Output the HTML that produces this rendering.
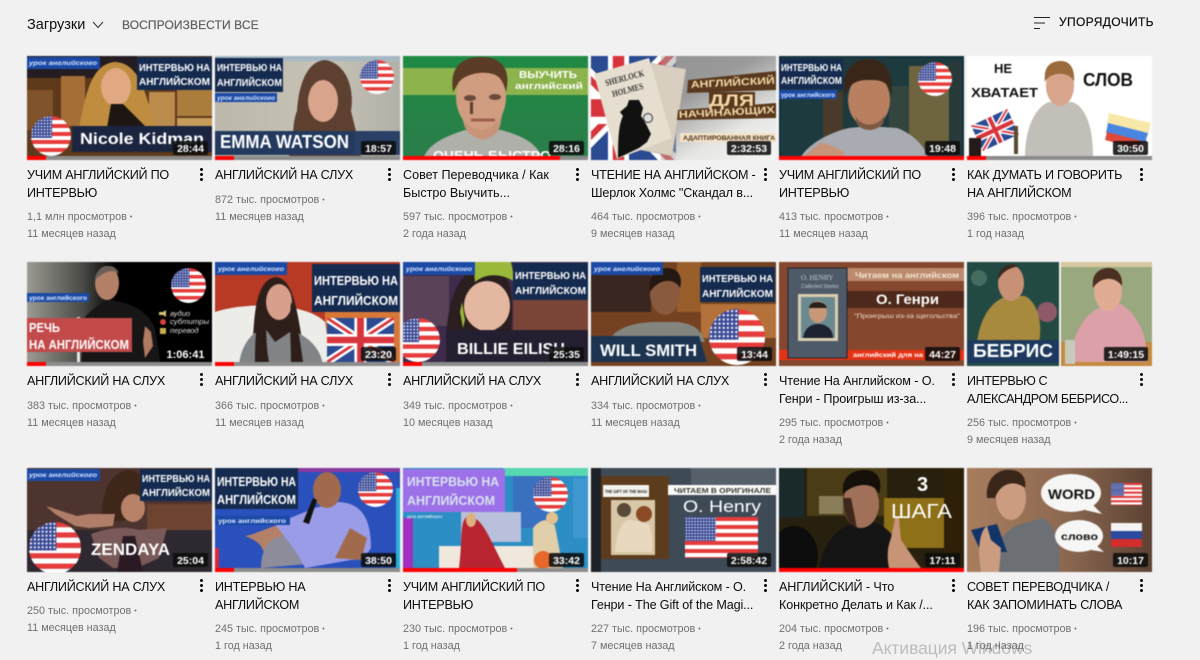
<!DOCTYPE html>
<html lang="ru"><head><meta charset="utf-8"><title>Загрузки</title>
<style>
html,body{margin:0;padding:0;background:#f1f1f1}
body{width:1200px;height:660px;overflow:hidden;position:relative;font-family:"Liberation Sans","DejaVu Sans",sans-serif}
.a{position:absolute;white-space:nowrap}
.th{position:absolute;width:185px;height:104px;filter:blur(.5px);display:block}
.ti{position:absolute;font-size:12.6px;line-height:18px;color:#0d0d0d;white-space:nowrap;filter:blur(.25px);margin-top:1px}
.c{letter-spacing:-.24px}
.m{position:absolute;font-size:10.8px;line-height:16px;color:#707070;white-space:nowrap;filter:blur(.25px);margin-top:1px}
.m i{font-style:normal;font-size:7px;vertical-align:1px}
.dots{position:absolute;width:3px;height:13px;background:radial-gradient(circle at 1.5px 1.5px,#111 1.4px,transparent 1.6px) 0 0/3px 5px repeat-y}
text{font-family:"Liberation Sans","DejaVu Sans",sans-serif}
.d{fill:#fff;font-weight:700;font-size:10.5px;text-anchor:middle}
.u{fill:#d8e4ff;font-style:italic;font-size:6px;font-weight:700}
.n{fill:#fff;font-weight:700;font-size:10px}
.b{fill:#fff;font-weight:700;font-size:16px}
</style></head><body>
<svg width="0" height="0" style="position:absolute"><defs>
<pattern id="st" width="2" height="8" patternUnits="userSpaceOnUse"><rect width="2" height="4" fill="#e63c3c"/><rect y="4" width="2" height="4" fill="#fff"/></pattern>
<pattern id="sd" width="3" height="3" patternUnits="userSpaceOnUse"><rect width="3" height="3" fill="#3a4a96"/><circle cx="1.5" cy="1.5" r=".8" fill="#fff"/></pattern>
<clipPath id="cc"><circle cx="20" cy="20" r="20"/></clipPath>
<symbol id="f" viewBox="0 0 40 40"><g clip-path="url(#cc)"><rect width="40" height="40" fill="url(#st)"/><rect width="21" height="22" fill="url(#sd)"/></g></symbol>
<symbol id="fr" viewBox="0 0 76 41" preserveAspectRatio="none"><rect width="76" height="41" fill="url(#st)"/><rect width="32" height="24" fill="url(#sd)"/></symbol>
<symbol id="uk" viewBox="0 0 60 40" preserveAspectRatio="none"><rect width="60" height="40" fill="#2a4a92"/><path d="M0 0L60 40M60 0L0 40" stroke="#fff" stroke-width="7"/><path d="M0 0L60 40M60 0L0 40" stroke="#d8343c" stroke-width="2.5"/><path d="M30 0V40M0 20H60" stroke="#fff" stroke-width="11"/><path d="M30 0V40M0 20H60" stroke="#d8343c" stroke-width="6"/></symbol>
<linearGradient id="g1" x1="0" x2="1" y1="0" y2="0"><stop offset="0" stop-color="#9b9b93"/><stop offset=".3" stop-color="#4a4a46"/><stop offset=".48" stop-color="#000"/></linearGradient>
<linearGradient id="g2" x1="0" x2="1" y1="0" y2="1"><stop offset="0" stop-color="#8f8f8f"/><stop offset=".45" stop-color="#9a9a9a"/><stop offset=".75" stop-color="#e6e6e4"/><stop offset="1" stop-color="#f6f6f4"/></linearGradient>
<linearGradient id="g3" x1="0" x2="0" y1="0" y2="1"><stop offset="0" stop-color="#1f8a44"/><stop offset="1" stop-color="#2b7d4a"/></linearGradient>
<linearGradient id="g4" x1="0" x2="1" y1="0" y2="0"><stop offset="0" stop-color="#a87d5e"/><stop offset=".5" stop-color="#8e6a52"/><stop offset="1" stop-color="#5c4234"/></linearGradient>
<linearGradient id="g5" x1="0" x2="1" y1="0" y2="0"><stop offset="0" stop-color="#bcb8ac"/><stop offset=".6" stop-color="#c6c3b6"/><stop offset="1" stop-color="#b2b1a8"/></linearGradient>
</defs></svg>

<div class="a" style="left:27px;top:17px;font-size:14.5px;line-height:17px;color:#0d0d0d">Загрузки</div>
<svg class="a" style="left:92px;top:21px" width="12" height="8"><path d="M1 1L6 6.500L11 1" fill="none" stroke="#333" stroke-width="1"/></svg>
<div class="a" style="left:122px;top:17px;font-size:12px;line-height:16px;color:#606060;letter-spacing:.1px;-webkit-text-stroke:.2px #606060">ВОСПРОИЗВЕСТИ ВСЕ</div>
<svg class="a" style="left:1034px;top:15px" width="17" height="16"><path d="M0 2.500H16M0 8H11M0 13.500H6" stroke="#222" stroke-width="1"/></svg>
<div class="a" style="left:1059px;top:14px;font-size:12px;line-height:16px;color:#0d0d0d;letter-spacing:.35px;-webkit-text-stroke:.2px #0d0d0d">УПОРЯДОЧИТЬ</div>

<!-- ROW 1 -->
<svg class="th" style="left:27px;top:56px" viewBox="0 0 185 104">
<rect width="185" height="104" fill="#5e3a1a"/><rect y="0" width="110" height="22" fill="#241c20"/><rect x="0" y="34" width="26" height="40" fill="#80532a"/><rect x="34" y="20" width="24" height="50" fill="#a56e36"/><rect x="122" y="36" width="26" height="36" fill="#bb8c4c"/><rect x="150" y="30" width="35" height="30" fill="#ab7d3c"/><rect x="150" y="62" width="35" height="10" fill="#c69c5a"/>
<path d="M52 72C58 45 62 8 88 6C112 7 118 35 128 70Z" fill="#c08d40"/><ellipse cx="89" cy="31" rx="15" ry="19" fill="#e0a982"/><path d="M80 72L84 48H96L120 72Z" fill="#1d1612"/>
<rect x="45" y="70" width="140" height="26" fill="#1c2540"/><use href="#f" x="4" y="60" width="40" height="40"/>
<rect width="73" height="12" y="1" fill="#1b4aa6"/><text x="2" y="9" class="u" textLength="68" lengthAdjust="spacingAndGlyphs">урок английского</text>
<rect x="110" y="1" width="75" height="33" fill="#142a4e"/><text x="112" y="15" class="n" textLength="71" lengthAdjust="spacingAndGlyphs">ИНТЕРВЬЮ НА</text><text x="112" y="29" class="n" textLength="71" lengthAdjust="spacingAndGlyphs">АНГЛИЙСКОМ</text>
<text x="53" y="88" class="b" textLength="124" lengthAdjust="spacingAndGlyphs">Nicole Kidman</text>
<rect x="146" y="85" width="35" height="14" rx="2" fill="#0c0c0c" opacity=".88"/><text x="163.500" y="96" class="d">28:44</text>
<rect y="100" width="185" height="4" fill="#8c8c8c"/><rect y="100" width="19" height="4" fill="#f00"/></svg>

<svg class="th" style="left:215px;top:56px" viewBox="0 0 185 104">
<rect width="185" height="104" fill="url(#g5)"/><rect x="0" width="185" height="5" fill="#a6b8c4"/>
<path d="M74 100C80 85 76 70 82 55C84 24 94 5 110 4C130 7 140 30 136 55C140 72 144 85 146 100Z" fill="#5e4030"/><ellipse cx="108" cy="45" rx="15" ry="21" fill="#d8a48c"/><path d="M96 96C100 76 116 72 122 78C132 78 146 86 146 96Z" fill="#16161a"/>
<rect x="0" y="75" width="140" height="24" fill="#233a5e"/><rect x="140" y="75" width="45" height="24" fill="#2a4066"/>
<rect y="2" width="68" height="34" fill="#142a4e"/><text x="2" y="15" class="n" textLength="65" lengthAdjust="spacingAndGlyphs">ИНТЕРВЬЮ НА</text><text x="2" y="30" class="n" textLength="65" lengthAdjust="spacingAndGlyphs">АНГЛИЙСКОМ</text>
<rect y="37" width="62" height="9" fill="#1b4aa6"/><text x="2" y="44" class="u" textLength="58" lengthAdjust="spacingAndGlyphs">урок английского</text>
<use href="#f" x="145" y="4" width="34" height="34"/>
<text x="5" y="92" class="b" font-size="18" style="font-size:18px" textLength="129" lengthAdjust="spacingAndGlyphs">EMMA WATSON</text>
<rect x="146" y="85" width="35" height="14" rx="2" fill="#0c0c0c" opacity=".88"/><text x="163.500" y="96" class="d">18:57</text>
<rect y="100" width="185" height="4" fill="#8c8c8c"/><rect y="100" width="19" height="4" fill="#f00"/></svg>

<svg class="th" style="left:403px;top:56px" viewBox="0 0 185 104">
<rect width="185" height="104" fill="url(#g3)"/><rect y="12" width="185" height="27" fill="#8cb34c"/>
<path d="M20 104C24 86 50 78 62 74H98C112 78 134 84 140 104Z" fill="#b0b0aa"/><path d="M58 58C62 70 60 78 80 84C100 78 96 70 100 56Z" fill="#c89478"/>
<ellipse cx="78" cy="41" rx="25" ry="33" fill="#d09d80"/><path d="M50 36C46 10 60 1 78 1C100 1 108 14 103 36C100 24 96 20 90 18C76 14 60 20 56 26Z" fill="#5a3c24"/>
<ellipse cx="67" cy="42" rx="6" ry="3" fill="#6a4a3c"/><ellipse cx="92" cy="41" rx="6" ry="3" fill="#6a4a3c"/><rect x="67" y="46" width="3" height="12" fill="#5a3e30"/><path d="M68 64H92" stroke="#9e5e4e" stroke-width="3"/>
<text x="116" y="22" class="n" textLength="58" lengthAdjust="spacingAndGlyphs">ВЫУЧИТЬ</text><text x="112" y="33" class="n" textLength="68" lengthAdjust="spacingAndGlyphs" style="font-size:9px">английский</text>
<text x="30" y="104" class="b" style="font-size:13px" textLength="118" lengthAdjust="spacingAndGlyphs">ОЧЕНЬ БЫСТРО</text>
<rect x="146" y="85" width="35" height="14" rx="2" fill="#0c0c0c" opacity=".88"/><text x="163.500" y="96" class="d">28:16</text>
<rect y="100" width="185" height="4" fill="#8c8c8c"/><rect y="100" width="157" height="4" fill="#f00"/></svg>

<svg class="th" style="left:591px;top:56px" viewBox="0 0 185 104">
<rect width="185" height="104" fill="url(#g2)"/><use href="#uk" x="-30" y="-6" width="115" height="116"/><path d="M70 0H85L85 104H70Z" fill="#a6a6a4" opacity=".5"/>
<path d="M58 7L95 13L81 100L50 94Z" fill="#d8cfc0" stroke="#b4aa9a" stroke-width=".5"/><path d="M3 18L58 2L81 82L26 103Z" fill="#e6dfd0"/>
<text x="15" y="30" transform="rotate(-15 15 30)" fill="#333" style="font-family:'Liberation Serif';font-weight:700;font-size:9px" textLength="40" lengthAdjust="spacingAndGlyphs">SHERLOCK</text><text x="22" y="41" transform="rotate(-15 22 41)" style="font-family:'Liberation Serif';font-weight:700;font-size:9px" fill="#333" textLength="32" lengthAdjust="spacingAndGlyphs">HOLMES</text>
<path d="M27 102C27 80 28 68 32 60L29 56L36 50L38 44L48 44L52 52L50 60L55 68L60 78L56 86L48 92Z" fill="#111"/><circle cx="57" cy="62" r="4.500" fill="#ddd" stroke="#333" stroke-width="1"/>
<path d="M97 24L185 15V34L96 37Z M118 36H164V52H118Z M87 54L185 47V62L86 64Z" fill="#5a3a1e"/>
<text x="100" y="32" style="font-size:10px;font-weight:700" fill="#f4d8a8" textLength="84" lengthAdjust="spacingAndGlyphs" transform="rotate(-3 100 32)">АНГЛИЙСКИЙ</text><text x="118" y="50" style="font-size:17px;font-weight:700" fill="#f4d8a8" textLength="45" lengthAdjust="spacingAndGlyphs">ДЛЯ</text><text x="88" y="62" style="font-size:10px;font-weight:700" fill="#f4d8a8" textLength="96" lengthAdjust="spacingAndGlyphs" transform="rotate(-3 88 62)">НАЧИНАЮЩИХ</text>
<rect x="89" y="77" width="96" height="9" fill="#f5e2c8"/><text x="92" y="84" style="font-size:6px;font-weight:700" fill="#4a3218" textLength="92" lengthAdjust="spacingAndGlyphs">АДАПТИРОВАННАЯ КНИГА</text>
<rect x="136" y="85" width="44" height="14" rx="2" fill="#0c0c0c" opacity=".88"/><text x="158" y="96" class="d">2:32:53</text></svg>

<svg class="th" style="left:779px;top:56px" viewBox="0 0 185 104">
<rect width="185" height="104" fill="#13313c"/><rect x="2" y="2" width="181" height="100" fill="#1d3a3e"/><rect x="44" y="36" width="20" height="60" fill="#4a3a2a"/><rect x="130" y="10" width="40" height="85" fill="#6e6440"/><rect x="110" y="30" width="20" height="60" fill="#34443e"/><rect x="172" y="6" width="10" height="90" fill="#2a3a38"/>
<path d="M20 104C30 84 60 74 70 72L90 70L118 72C130 76 146 88 150 104Z" fill="#a8acb2"/><path d="M20 104L40 88C44 84 56 92 66 96L60 104Z" fill="#c89478"/>
<ellipse cx="90" cy="44" rx="21" ry="27" fill="#b98060"/><path d="M66 40C62 12 76 3 90 3C106 3 116 18 112 40C110 24 100 24 90 24C80 24 70 26 66 40Z" fill="#3a2618"/><path d="M76 58C80 72 100 72 106 58L104 68C96 76 84 76 78 68Z" fill="#7e5a42"/>
<rect y="3" width="64" height="30" fill="#142a4e"/><text x="2" y="15" class="n" textLength="61" lengthAdjust="spacingAndGlyphs">ИНТЕРВЬЮ НА</text><text x="2" y="28" class="n" textLength="61" lengthAdjust="spacingAndGlyphs">АНГЛИЙСКОМ</text>
<rect y="34" width="58" height="9" fill="#1b4aa6"/><text x="2" y="41" class="u" textLength="54" lengthAdjust="spacingAndGlyphs" style="font-style:normal">урок английского</text>
<use href="#f" x="139" y="6" width="34" height="34"/>
<rect x="146" y="85" width="35" height="14" rx="2" fill="#0c0c0c" opacity=".88"/><text x="163.500" y="96" class="d">19:48</text>
<rect y="100" width="185" height="4" fill="#f00"/></svg>

<svg class="th" style="left:967px;top:56px" viewBox="0 0 185 104">
<rect width="185" height="104" fill="#fff"/>
<path d="M58 100C58 70 70 50 82 46L105 46C118 50 126 70 126 100Z" fill="#c2bfb9"/><ellipse cx="93" cy="30" rx="14" ry="20" fill="#d8a48c"/><path d="M78 26C76 8 86 5 94 5C104 5 108 14 107 26C104 16 84 14 78 26Z" fill="#9a6c3c"/>
<g transform="rotate(-25 28 74)"><use href="#uk" x="8" y="60" width="40" height="28"/></g>
<path d="M142 57L184 67L181 79L140 68Z" fill="#f8e8a8"/><path d="M141 67L181 77L178 87L139 77Z" fill="#4a86e0"/><path d="M140 76L175 85L172 93L138 84Z" fill="#e0483c"/><rect x="47" y="70" width="4" height="28" fill="#5a4a30"/><rect x="2" y="82" width="12" height="18" fill="#241a18"/>
<text x="27" y="17" style="font-size:13px;font-weight:700" fill="#111">НЕ</text><text x="4" y="41" style="font-size:13px;font-weight:700" fill="#111" textLength="67" lengthAdjust="spacingAndGlyphs">ХВАТАЕТ</text><text x="116" y="30" style="font-size:18px;font-weight:700" fill="#111" textLength="50" lengthAdjust="spacingAndGlyphs">СЛОВ</text>
<rect x="146" y="85" width="35" height="14" rx="2" fill="#0c0c0c" opacity=".88"/><text x="163.500" y="96" class="d">30:50</text>
<rect y="100" width="185" height="4" fill="#8c8c8c"/><rect y="100" width="19" height="4" fill="#f00"/></svg>

<!-- ROW 2 -->
<svg class="th" style="left:27px;top:262px" viewBox="0 0 185 104">
<rect width="185" height="104" fill="url(#g1)"/><rect x="100" width="85" height="104" fill="#000"/><rect x="50" y="55" width="3" height="45" fill="#e8e8e8"/>
<path d="M54 104L58 55C70 42 78 40 82 38C96 40 118 44 128 66L134 104Z" fill="#171515"/><ellipse cx="80" cy="21" rx="12" ry="17" fill="#b48068"/><path d="M68 18C68 4 88 -2 92 12C86 6 76 10 68 18Z" fill="#6a6058"/><path d="M116 80L118 64L124 70L126 84L118 96Z" fill="#b07a60"/>
<rect y="56" width="105" height="34" fill="#c24a4a"/><text x="2" y="70" class="n" style="font-size:13px" textLength="31" lengthAdjust="spacingAndGlyphs">РЕЧЬ</text><text x="2" y="87" class="n" style="font-size:13px" textLength="100" lengthAdjust="spacingAndGlyphs">НА АНГЛИЙСКОМ</text>
<rect y="31" width="62" height="9" fill="#1b4aa6"/><text x="2" y="38" class="u" textLength="58" lengthAdjust="spacingAndGlyphs" style="font-style:normal">урок английского</text>
<use href="#f" x="144" y="6" width="35" height="35"/>
<path d="M132 50H136L139 48V55L136 53H132Z" fill="#d8c070"/><circle cx="136" cy="60" r="3" fill="#d84040"/><rect x="133" y="66" width="6" height="6" fill="#c8b050"/>
<g style="font-style:italic;font-size:7.500px;fill:#ddd"><text x="143" y="54">аудио</text><text x="143" y="62" textLength="39" lengthAdjust="spacingAndGlyphs">субтитры</text><text x="143" y="71">перевод</text></g>
<text x="158.500" y="96" class="d" style="font-size:11px">1:06:41</text>
<rect y="100" width="185" height="4" fill="#8c8c8c"/><rect y="100" width="19" height="4" fill="#f00"/></svg>

<svg class="th" style="left:215px;top:262px" viewBox="0 0 185 104">
<rect width="185" height="104" fill="#b83a24"/><rect x="110" y="50" width="75" height="54" fill="#d87838"/><path d="M0 50C30 40 90 40 110 60L116 100H0Z" fill="#ecece8"/>
<path d="M36 100C40 70 36 20 60 15C82 16 82 60 92 100Z" fill="#2e1e1a"/><ellipse cx="64" cy="40" rx="13" ry="18" fill="#d8a08c"/><path d="M24 104C26 80 40 68 50 66L60 80L78 68C90 74 106 84 108 104Z" fill="#808486"/><path d="M40 100C40 70 42 50 50 40C52 60 50 80 54 100ZM88 100C84 70 80 50 76 40C74 60 76 80 76 100Z" fill="#2e1e1a"/>
<rect width="72" height="13" fill="#1b4aa6"/><text x="3" y="9" class="u" textLength="66" lengthAdjust="spacingAndGlyphs">урок английского</text>
<rect x="97" y="2" width="88" height="48" fill="#142a4e"/><text x="99" y="23" class="n" style="font-size:13px" textLength="84" lengthAdjust="spacingAndGlyphs">ИНТЕРВЬЮ НА</text><text x="99" y="43" class="n" style="font-size:13px" textLength="84" lengthAdjust="spacingAndGlyphs">АНГЛИЙСКОМ</text>
<use href="#uk" x="112" y="56" width="67" height="44"/>
<rect x="146" y="85" width="35" height="14" rx="2" fill="#0c0c0c" opacity=".88"/><text x="163.500" y="96" class="d">23:20</text>
<rect y="100" width="185" height="4" fill="#8c8c8c"/><rect y="100" width="19" height="4" fill="#f00"/></svg>

<svg class="th" style="left:403px;top:262px" viewBox="0 0 185 104">
<rect width="185" height="104" fill="#3e2a4a"/><rect x="0" y="14" width="46" height="50" fill="#5a4258"/><rect x="110" y="38" width="75" height="34" fill="#7a4436"/>
<path d="M44 100C40 50 52 8 80 4C104 4 112 20 108 68L112 100Z" fill="#2a1e1e"/><path d="M70 0H108L112 20C100 12 84 10 72 20Z" fill="#9ab83a"/><path d="M59 40L62 58L60 66L57 50Z" fill="#9ab83a"/><ellipse cx="84" cy="44" rx="23" ry="25" fill="#e4b8a0"/>
<rect x="43" y="68" width="142" height="32" fill="#241f30"/><use href="#f" x="-7" y="56" width="44" height="44"/>
<rect width="72" height="13" fill="#1b4aa6"/><text x="3" y="9" class="u" textLength="66" lengthAdjust="spacingAndGlyphs">урок английского</text>
<rect x="110" y="1" width="75" height="37" fill="#142a4e"/><text x="112" y="17" class="n" textLength="71" lengthAdjust="spacingAndGlyphs">ИНТЕРВЬЮ НА</text><text x="112" y="32" class="n" textLength="71" lengthAdjust="spacingAndGlyphs">АНГЛИЙСКОМ</text>
<text x="54" y="92" class="b" textLength="108" lengthAdjust="spacingAndGlyphs">BILLIE EILISH</text>
<rect x="146" y="85" width="35" height="14" rx="2" fill="#0c0c0c" opacity=".88"/><text x="163.500" y="96" class="d">25:35</text>
<rect y="100" width="185" height="4" fill="#8c8c8c"/><rect y="100" width="19" height="4" fill="#f00"/></svg>

<svg class="th" style="left:591px;top:262px" viewBox="0 0 185 104">
<rect width="185" height="104" fill="#744220"/><rect width="60" height="42" y="8" fill="#3a2620"/><rect x="86" y="0" width="24" height="50" fill="#9a5e2a"/><rect x="110" y="42" width="75" height="34" fill="#b4723a"/>
<path d="M20 76C26 64 50 60 64 60H86C104 62 110 68 114 80Z" fill="#84857f"/><ellipse cx="74" cy="32" rx="15" ry="21" fill="#8a5a3e"/><path d="M59 30C56 12 66 6 76 6C88 6 92 16 89 26C84 16 68 16 59 30Z" fill="#241812"/>
<path d="M0 74H108L116 100H0Z" fill="#1c3450"/>
<rect width="72" height="13" fill="#1b4aa6"/><text x="3" y="9" class="u" textLength="66" lengthAdjust="spacingAndGlyphs">урок английского</text>
<rect x="109" y="5" width="75" height="35" fill="#142a4e"/><text x="111" y="20" class="n" textLength="71" lengthAdjust="spacingAndGlyphs">ИНТЕРВЬЮ НА</text><text x="111" y="35" class="n" textLength="71" lengthAdjust="spacingAndGlyphs">АНГЛИЙСКОМ</text>
<use href="#f" x="118" y="47" width="56" height="56"/>
<text x="9" y="94" class="b" style="font-size:17px" textLength="97" lengthAdjust="spacingAndGlyphs">WILL SMITH</text>
<rect x="146" y="85" width="35" height="14" rx="2" fill="#0c0c0c" opacity=".88"/><text x="163.500" y="96" class="d">13:44</text></svg>

<svg class="th" style="left:779px;top:262px" viewBox="0 0 185 104">
<rect width="185" height="104" fill="#85482e"/><rect x="68" y="6" width="117" height="13" fill="#bc8a6c"/><rect x="68" y="29" width="117" height="17" fill="#4e281a"/><rect x="0" y="88" width="185" height="10" fill="#e63214"/>
<rect x="9" y="6" width="59" height="90" fill="#4e5a68" stroke="#20242c"/><rect x="19" y="32" width="40" height="47" fill="#d8cdb0"/><rect x="22" y="35" width="34" height="41" fill="#6a8a90"/><ellipse cx="39" cy="50" rx="9" ry="11" fill="#c89878"/><path d="M24 76C26 64 34 62 39 62C46 62 54 66 54 76Z" fill="#1d2230"/><path d="M30 46C30 38 46 38 48 46Z" fill="#2a2018"/>
<text x="22" y="18" style="font-size:7px;font-family:'Liberation Serif'" fill="#c8ccd4">O. HENRY</text><text x="22" y="26" style="font-size:5px;font-style:italic" fill="#c8ccd4">Collected Stories</text>
<text x="76" y="16" style="font-size:8px;font-weight:700" fill="#f4e4d4" textLength="104" lengthAdjust="spacingAndGlyphs">Читаем на английском</text>
<text x="97" y="42" style="font-size:14px;font-weight:700" fill="#fff" textLength="63" lengthAdjust="spacingAndGlyphs">О. Генри</text>
<text x="75" y="56" style="font-size:6.500px" fill="#eadccc" textLength="106" lengthAdjust="spacingAndGlyphs">"Проигрыш из-за щегольства"</text>
<text x="74" y="95" style="font-size:6.500px;font-weight:700" fill="#fff" textLength="70" lengthAdjust="spacingAndGlyphs">английский для на</text>
<rect x="146" y="85" width="35" height="14" rx="2" fill="#0c0c0c" opacity=".88"/><text x="163.500" y="96" class="d">44:27</text></svg>

<svg class="th" style="left:967px;top:262px" viewBox="0 0 185 104">
<rect width="92" height="104" fill="#234a42"/><circle cx="80" cy="50" r="10" fill="#8e5a6a"/><circle cx="12" cy="16" r="8" fill="#446c60"/><rect x="94" width="91" height="104" fill="#9aa880"/><rect x="94" width="91" height="5" fill="#d8c8a0"/><rect x="94" y="80" width="91" height="24" fill="#c48a40"/><rect x="92" width="2" height="104" fill="#f1f1f1"/>
<path d="M10 80C14 50 28 38 40 34L58 34C70 40 76 60 72 80Z" fill="#a88a3e"/><ellipse cx="44" cy="21" rx="13" ry="18" fill="#c89074"/><path d="M31 18C30 4 44 0 52 4C46 6 38 6 31 18Z" fill="#3a2a22"/>
<path d="M104 104C104 70 120 48 138 44L154 42C170 52 180 72 180 96L180 100H104Z" fill="#dca0a8"/><ellipse cx="141" cy="29" rx="14" ry="20" fill="#e0ac94"/><path d="M126 26C124 10 134 6 142 6C152 6 156 16 155 24C148 14 134 14 126 26Z" fill="#4a3020"/>
<rect x="98" y="78" width="10" height="24" fill="#c8d0c8" opacity=".9"/>
<rect y="78" width="92" height="23" fill="#1d3a5e"/><text x="6" y="95" class="b" style="font-size:18px" textLength="80" lengthAdjust="spacingAndGlyphs">БЕБРИС</text>
<rect x="137" y="85" width="44" height="14" rx="2" fill="#0c0c0c" opacity=".88"/><text x="159" y="96" class="d">1:49:15</text></svg>

<!-- ROW 3 -->
<svg class="th" style="left:27px;top:468px" viewBox="0 0 185 104">
<rect width="185" height="104" fill="#2e2830"/><rect width="185" height="62" fill="#4e342e"/><rect x="120" y="36" width="65" height="26" fill="#6e4430"/>
<path d="M74 54C76 34 76 8 100 2C114 2 120 14 118 22C120 32 112 46 104 52Z" fill="#3e2618"/><ellipse cx="106" cy="40" rx="12" ry="14" fill="#b88268"/>
<path d="M19 38L50 48L62 46L88 46L86 58L62 60L48 58L28 46Z" fill="#b07e68"/><path d="M64 66C80 60 100 58 112 62L140 60L132 90L110 100L86 100L72 90Z" fill="#7a5a58"/><path d="M90 104L96 68H108L116 104Z" fill="#2a1a24"/>
<rect width="73" height="12" y="1" fill="#1b4aa6"/><text x="2" y="9" class="u" textLength="68" lengthAdjust="spacingAndGlyphs">урок английского</text>
<rect x="113" y="1" width="72" height="32" fill="#142a4e"/><text x="115" y="14" class="n" textLength="68" lengthAdjust="spacingAndGlyphs">ИНТЕРВЬЮ НА</text><text x="115" y="28" class="n" textLength="68" lengthAdjust="spacingAndGlyphs">АНГЛИЙСКОМ</text>
<use href="#f" x="2" y="54" width="52" height="52"/>
<text x="64" y="87" class="b" style="font-size:17px" textLength="79" lengthAdjust="spacingAndGlyphs">ZENDAYA</text>
<rect x="146" y="85" width="35" height="14" rx="2" fill="#0c0c0c" opacity=".88"/><text x="163.500" y="96" class="d">25:04</text></svg>

<svg class="th" style="left:215px;top:468px" viewBox="0 0 185 104">
<rect width="185" height="104" fill="#2a50bc"/><rect x="83" width="102" height="4" fill="#8a3a9e"/><rect x="181" y="20" width="4" height="84" fill="#28b0d8"/><rect y="80" width="4" height="20" fill="#d8283c"/>
<path d="M30 68C42 66 60 56 80 52L66 96H50C50 80 46 74 30 68Z" fill="#b48068"/><path d="M46 100C46 72 64 64 78 70L94 96Z" fill="#8c8c9a"/>
<path d="M60 56L100 40L122 34C150 34 156 56 156 80C150 90 144 92 136 92L90 100C80 80 70 70 60 56Z" fill="#9a9ce8"/><ellipse cx="112" cy="22" rx="14" ry="18" fill="#a26a4c"/><path d="M120 90L135 60L152 70L146 92Z" fill="#a26a4c"/><path d="M88 54L98 30L102 32L94 56Z" fill="#111"/>
<rect width="83" height="41" y="0" fill="#142a4e"/><text x="2" y="18" class="n" style="font-size:13px" textLength="79" lengthAdjust="spacingAndGlyphs">ИНТЕРВЬЮ НА</text><text x="2" y="36" class="n" style="font-size:13px" textLength="79" lengthAdjust="spacingAndGlyphs">АНГЛИЙСКОМ</text>
<rect y="48" width="75" height="9" fill="#1b4aa6"/><text x="3" y="55" class="u" textLength="68" lengthAdjust="spacingAndGlyphs" style="font-style:normal">урок английского</text>
<use href="#f" x="143" y="4" width="35" height="35"/>
<rect x="146" y="85" width="35" height="14" rx="2" fill="#0c0c0c" opacity=".88"/><text x="163.500" y="96" class="d">38:50</text>
<rect y="100" width="185" height="4" fill="#8c8c8c"/><rect y="100" width="19" height="4" fill="#f00"/></svg>

<svg class="th" style="left:403px;top:468px" viewBox="0 0 185 104">
<rect width="185" height="104" fill="#2c8ec4"/><rect x="100" width="85" height="8" fill="#58d8b0"/><rect x="0" y="50" width="10" height="50" fill="#a030c0"/><rect x="110" y="8" width="38" height="52" fill="#3a70c0"/><rect x="58" y="44" width="60" height="30" fill="#b8c0dc"/><rect x="170" y="10" width="15" height="60" fill="#4098d0"/>
<rect x="36" y="78" width="108" height="22" fill="#f0e8dc"/><path d="M56 100C60 70 56 50 66 48C80 50 86 70 102 100Z" fill="#b82430"/><ellipse cx="68" cy="52" rx="5" ry="7" fill="#dcb080"/><path d="M130 100V60C136 52 146 48 152 58L160 100Z" fill="#e0cfa8"/><circle cx="149" cy="50" r="6" fill="#e4c08c"/><circle cx="140" cy="92" r="9" fill="#e8682c"/>
<rect y="1" width="102" height="43" fill="#9c70e8"/><text x="4" y="18" class="n" style="font-size:13px;fill:#d8e4f0" textLength="92" lengthAdjust="spacingAndGlyphs">ИНТЕРВЬЮ НА</text><text x="4" y="37" class="n" style="font-size:13px;fill:#d8e4f0" textLength="88" lengthAdjust="spacingAndGlyphs">АНГЛИЙСКОМ</text>
<text x="4" y="50" style="font-size:4.500px" fill="#fff">урок английского</text>
<use href="#f" x="130" y="9" width="35" height="35"/>
<rect x="146" y="85" width="35" height="14" rx="2" fill="#0c0c0c" opacity=".88"/><text x="163.500" y="96" class="d">33:42</text>
<rect y="100" width="185" height="4" fill="#8c8c8c"/><rect y="100" width="114" height="4" fill="#f00"/></svg>

<svg class="th" style="left:591px;top:468px" viewBox="0 0 185 104">
<rect width="185" height="104" fill="#3e4a56"/><rect x="0" width="10" height="104" fill="#1c2228"/><rect x="100" width="85" height="17" fill="#56606a"/>
<rect x="10" y="8" width="68" height="83" fill="#5c3c1c"/><rect x="12" y="17" width="46" height="12" fill="#f4f2ec"/><text x="14" y="25" style="font-size:4.500px;font-weight:700" fill="#222" textLength="42" lengthAdjust="spacingAndGlyphs">THE GIFT OF THE MAGI</text>
<rect x="20" y="32" width="44" height="55" fill="#d8c8a8"/><circle cx="33" cy="42" r="7" fill="#5a4a38"/><circle cx="53" cy="46" r="8" fill="#8a4a28"/><path d="M24 84C26 60 34 50 40 52L58 56C62 70 62 80 60 84Z" fill="#e8d8c0"/>
<rect x="77" y="17" width="108" height="10" fill="#fafaf6"/><text x="83" y="25" style="font-size:7px;font-weight:700" fill="#3a3a3a" textLength="97" lengthAdjust="spacingAndGlyphs">ЧИТАЕМ В ОРИГИНАЛЕ</text>
<text x="92" y="44" style="font-size:17px" fill="#fff" textLength="78" lengthAdjust="spacingAndGlyphs">O. Henry</text>
<use href="#fr" x="94" y="49" width="73" height="41"/>
<rect x="136" y="85" width="44" height="14" rx="2" fill="#0c0c0c" opacity=".88"/><text x="158" y="96" class="d">2:58:42</text></svg>

<svg class="th" style="left:779px;top:468px" viewBox="0 0 185 104">
<rect width="185" height="104" fill="#28200e"/><rect x="28" y="0" width="80" height="48" fill="#4a3c16"/><rect x="40" y="28" width="24" height="18" fill="#8a7e58"/><rect x="105" y="30" width="60" height="50" fill="#8e7018"/><rect x="0" y="0" width="25" height="50" fill="#1a2a2a"/><ellipse cx="15" cy="88" rx="24" ry="30" fill="#0c0c0c"/><rect x="165" y="0" width="20" height="100" fill="#2e2008"/>
<path d="M40 104C42 76 60 58 74 56L94 54C112 60 120 72 124 100H40Z" fill="#141414"/><ellipse cx="82" cy="36" rx="18" ry="24" fill="#a07058"/><path d="M64 26C62 6 76 2 86 2C100 2 104 14 100 26C96 14 76 14 64 26Z" fill="#15100a"/><path d="M64 30C64 44 68 56 78 60L72 30Z" fill="#3e281c"/>
<path d="M110 100C108 90 108 80 112 70L116 50L120 50L122 72C128 80 134 90 142 100Z" fill="#c89478"/>
<text x="138" y="23" style="font-size:20px;font-weight:700" fill="#fff">3</text><text x="112" y="50" style="font-size:20px" fill="#fff" textLength="61" lengthAdjust="spacingAndGlyphs">ШАГА</text>
<rect x="146" y="85" width="35" height="14" rx="2" fill="#0c0c0c" opacity=".88"/><text x="163.500" y="96" class="d">17:11</text>
<rect y="100" width="185" height="4" fill="#f00"/></svg>

<svg class="th" style="left:967px;top:468px" viewBox="0 0 185 104">
<rect width="185" height="104" fill="url(#g4)"/>
<path d="M24 104C26 74 40 60 54 56L76 50C90 58 94 80 92 104Z" fill="#6c7074"/><ellipse cx="44" cy="30" rx="15" ry="22" fill="#cc9c80"/><path d="M20 30C18 8 34 0 44 2C54 2 60 10 58 20C48 12 34 14 28 30Z" fill="#3a2618"/><path d="M4 62L30 56L40 84L14 84Z" fill="#123468"/><path d="M12 88C12 74 14 62 20 58L24 72L34 80L32 104H14Z" fill="#cc9c80"/>
<ellipse cx="104" cy="25" rx="30" ry="19" fill="#f6f6f4"/><path d="M125 36L135 46L118 42Z" fill="#f6f6f4"/><ellipse cx="112" cy="68" rx="24" ry="16" fill="#f6f6f4"/><path d="M130 78L137 84L124 82Z" fill="#f6f6f4"/>
<text x="81" y="31" style="font-size:14px;font-weight:700" fill="#111" textLength="47" lengthAdjust="spacingAndGlyphs">WORD</text><text x="94" y="72" style="font-size:10px;font-weight:700" fill="#111" textLength="37" lengthAdjust="spacingAndGlyphs">слово</text>
<use href="#fr" x="144" y="15" width="31" height="22"/>
<rect x="144" y="55" width="31" height="8" fill="#f4f4f4"/><rect x="144" y="63" width="31" height="8" fill="#2a4aa0"/><rect x="144" y="71" width="31" height="8" fill="#d22c2c"/>
<rect x="146" y="85" width="35" height="14" rx="2" fill="#0c0c0c" opacity=".88"/><text x="163.500" y="96" class="d">10:17</text></svg>

<!-- Row 1 text -->
<div class="ti c" style="left:27px;top:165px">УЧИМ АНГЛИЙСКИЙ ПО<br>ИНТЕРВЬЮ</div><div class="dots" style="left:199.500px;top:168px"></div>
<div class="m" style="left:27px;top:208px">1,1 млн просмотров <i>•</i><br>11 месяцев назад</div>
<div class="ti c" style="left:215px;top:165px">АНГЛИЙСКИЙ НА СЛУХ</div><div class="dots" style="left:387.500px;top:168px"></div>
<div class="m" style="left:215px;top:191px">872 тыс. просмотров <i>•</i><br>11 месяцев назад</div>
<div class="ti" style="left:403px;top:165px">Совет Переводчика / Как<br>Быстро Выучить...</div><div class="dots" style="left:575.500px;top:168px"></div>
<div class="m" style="left:403px;top:208px">597 тыс. просмотров <i>•</i><br>2 года назад</div>
<div class="ti" style="left:591px;top:165px"><span class="c">ЧТЕНИЕ НА АНГЛИЙСКОМ -</span><br><span style="letter-spacing:-.12px">Шерлок Холмс "Скандал в...</span></div><div class="dots" style="left:763.500px;top:168px"></div>
<div class="m" style="left:591px;top:208px">464 тыс. просмотров <i>•</i><br>9 месяцев назад</div>
<div class="ti c" style="left:779px;top:165px">УЧИМ АНГЛИЙСКИЙ ПО<br>ИНТЕРВЬЮ</div><div class="dots" style="left:951.500px;top:168px"></div>
<div class="m" style="left:779px;top:208px">413 тыс. просмотров <i>•</i><br>11 месяцев назад</div>
<div class="ti c" style="left:967px;top:165px">КАК ДУМАТЬ И ГОВОРИТЬ<br>НА АНГЛИЙСКОМ</div><div class="dots" style="left:1139.500px;top:168px"></div>
<div class="m" style="left:967px;top:208px">396 тыс. просмотров <i>•</i><br>1 год назад</div>

<!-- Row 2 text -->
<div class="ti c" style="left:27px;top:371px">АНГЛИЙСКИЙ НА СЛУХ</div><div class="dots" style="left:199.500px;top:373px"></div>
<div class="m" style="left:27px;top:397px">383 тыс. просмотров <i>•</i><br>11 месяцев назад</div>
<div class="ti c" style="left:215px;top:371px">АНГЛИЙСКИЙ НА СЛУХ</div><div class="dots" style="left:387.500px;top:373px"></div>
<div class="m" style="left:215px;top:397px">366 тыс. просмотров <i>•</i><br>11 месяцев назад</div>
<div class="ti c" style="left:403px;top:371px">АНГЛИЙСКИЙ НА СЛУХ</div><div class="dots" style="left:575.500px;top:373px"></div>
<div class="m" style="left:403px;top:397px">349 тыс. просмотров <i>•</i><br>10 месяцев назад</div>
<div class="ti c" style="left:591px;top:371px">АНГЛИЙСКИЙ НА СЛУХ</div><div class="dots" style="left:763.500px;top:373px"></div>
<div class="m" style="left:591px;top:397px">334 тыс. просмотров <i>•</i><br>11 месяцев назад</div>
<div class="ti" style="left:779px;top:371px;letter-spacing:-.1px">Чтение На Английском - О.<br>Генри - Проигрыш из-за...</div><div class="dots" style="left:951.500px;top:373px"></div>
<div class="m" style="left:779px;top:414px">295 тыс. просмотров <i>•</i><br>2 года назад</div>
<div class="ti" style="left:967px;top:371px;letter-spacing:-.45px">ИНТЕРВЬЮ С<br>АЛЕКСАНДРОМ БЕБРИСО...</div><div class="dots" style="left:1139.500px;top:373px"></div>
<div class="m" style="left:967px;top:414px">256 тыс. просмотров <i>•</i><br>9 месяцев назад</div>

<!-- Row 3 text -->
<div class="ti c" style="left:27px;top:577px">АНГЛИЙСКИЙ НА СЛУХ</div><div class="dots" style="left:199.500px;top:579px"></div>
<div class="m" style="left:27px;top:602px">250 тыс. просмотров <i>•</i><br>11 месяцев назад</div>
<div class="ti c" style="left:215px;top:577px">ИНТЕРВЬЮ НА<br>АНГЛИЙСКОМ</div><div class="dots" style="left:387.500px;top:579px"></div>
<div class="m" style="left:215px;top:620px">245 тыс. просмотров <i>•</i><br>1 год назад</div>
<div class="ti c" style="left:403px;top:577px">УЧИМ АНГЛИЙСКИЙ ПО<br>ИНТЕРВЬЮ</div><div class="dots" style="left:575.500px;top:579px"></div>
<div class="m" style="left:403px;top:620px">230 тыс. просмотров <i>•</i><br>1 год назад</div>
<div class="ti" style="left:591px;top:577px;letter-spacing:-.13px">Чтение На Английском - О.<br>Генри - The Gift of the Magi...</div><div class="dots" style="left:763.500px;top:579px"></div>
<div class="m" style="left:591px;top:620px">227 тыс. просмотров <i>•</i><br>7 месяцев назад</div>
<div class="ti" style="left:779px;top:577px;letter-spacing:-.1px">АНГЛИЙСКИЙ - Что<br>Конкретно Делать и Как /...</div><div class="dots" style="left:951.500px;top:579px"></div>
<div class="m" style="left:779px;top:620px">204 тыс. просмотров <i>•</i><br>2 года назад</div>
<div class="ti c" style="left:967px;top:577px">СОВЕТ ПЕРЕВОДЧИКА /<br>КАК ЗАПОМИНАТЬ СЛОВА</div><div class="dots" style="left:1139.500px;top:579px"></div>
<div class="m" style="left:967px;top:620px">196 тыс. просмотров <i>•</i><br>1 год назад</div>

<div class="a" style="left:872px;top:638px;font-size:17.4px;line-height:20px;color:rgba(110,110,110,.4)">Активация Windows</div>
</body></html>
